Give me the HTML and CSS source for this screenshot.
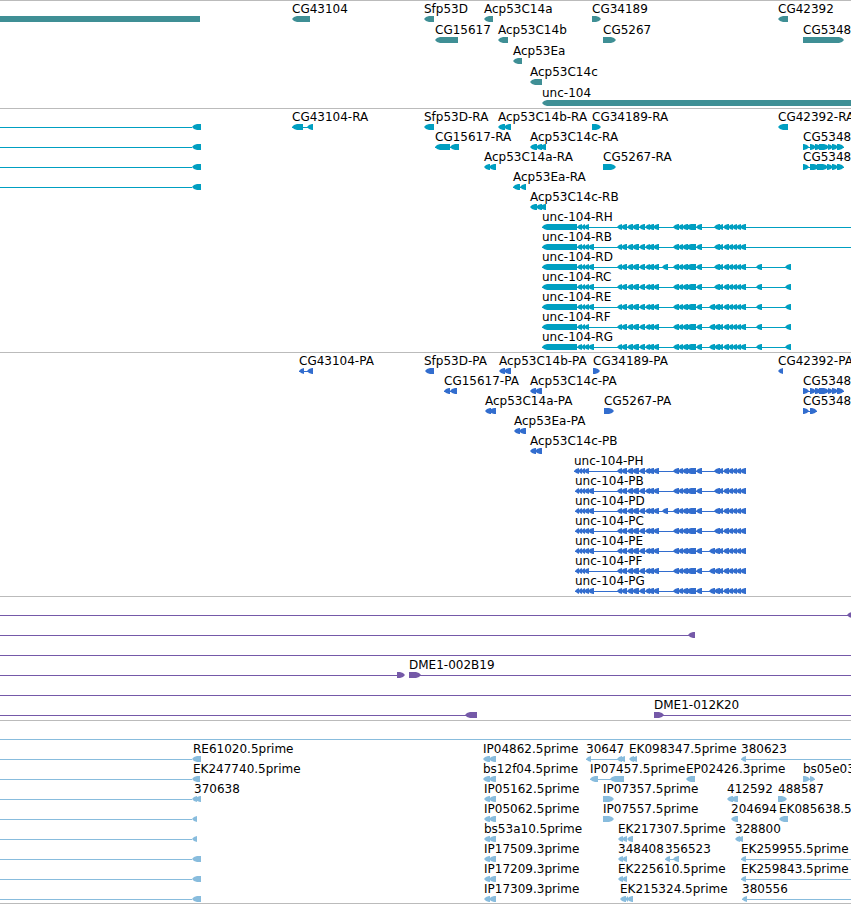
FILE: index.html
```html
<!DOCTYPE html>
<html lang="en">
<head>
    <meta charset="UTF-8">
    <meta name="viewport" content="width=device-width, initial-scale=1.0">
    <title>Genome Browser</title>
    <link rel="stylesheet" href="styles.css">
</head>
<body>
    <main class="browser">
        <section class="track genes" id="genes"></section>
        <section class="track transcripts" id="transcripts"></section>
        <section class="track proteins" id="proteins"></section>
        <section class="track clones" id="clones"></section>
        <section class="track ests" id="ests"></section>
    </main>
    <script src="tracks.js"></script>
</body>
</html>
```

FILE: styles.css
```css
body {
    margin: 0;
    background-color: #fff;
    color: #000;
    font-family: "DejaVu Sans", Verdana, sans-serif;
    font-size: 12px;
}
.browser {
    overflow: hidden;
    border-bottom: 1px solid #bbb;
}
.track {
    padding: 1px 0 2px;
    border-top: 1px solid #bbb;
}
.row {
    position: relative;
    height: 20px;
}
.label {
    position: absolute;
    top: 0;
    line-height: 14px;
    white-space: nowrap;
}
.glyphs {
    position: absolute;
    left: 0;
    top: 14px;
    width: 100%;
    height: 6px;
    fill: currentColor;
}
.genes {
    padding-bottom: 1px;
}
.genes .row {
    height: 21px;
}
.genes .glyphs {
    color: #3f8f95;
}
.transcripts .glyphs {
    color: #009fc1;
}
.proteins .glyphs {
    color: #326dce;
}
.clones .glyphs {
    color: #7559a8;
}
.ests {
    padding-bottom: 1px;
}
.ests .glyphs {
    color: #88bcdd;
}
```

FILE: tracks.js
```js
const END = 4000; // runs past the right edge of the view
const HEAD = 5;

// feature: name, label position, strand, exons, optional [from, to] of the line
function f(name, x, strand, exons, line) {
    return { name, x, strand, exons, line };
}

const left = (end) => f("", 0, "-", [[192, end]], [0, 192]);
const whole = f("", 0, "-", [], [0, END]);

// exons shared by all unc-104 isoforms
function unc(name, x, opts) {
    const exons = opts.protein
        ? [[x, 579], [578, 582], [581, 585], [584, 589]]
        : [[542, 577], [577, 582], [581, 585], [584, 589]];
    if (opts.a) exons.push([588, 594]);
    exons.push([617, 622], [621, 627], [627, 633], [632, 639], [639, 645], [645, 650], [648, 654], [653, 659]);
    if (opts.b) exons.push([662, 668]);
    exons.push([673, 679], [678, 683], [682, 688], [686, 696], [696, 702]);
    if (opts.c) exons.push([709, 715]);
    exons.push([714, 720], [718, 723], [723, 729], [728, 733], [732, 737], [736, 741], [740, 746]);
    if (opts.tail) exons.push([756, 762], [785, 791]);
    const to = opts.open ? END : exons[exons.length - 1][1];
    return f(name, x, "-", exons, [x, to]);
}

const c14c = [[530, 537], [536, 542], [540, 546]];
const cg5348a = [[803, 809], [810, 816], [815, 821], [819, 829], [828, 833], [832, 838], [837, 844]];
const cg5348b = [[803, 809], [810, 819], [817, 828], [827, 833], [832, 838], [837, 844]];
const est = [[484, 490], [489, 496]];

const tracks = {
    genes: [
        [f("", 0, "", [[0, 200]]),
            f("CG43104", 292, "-", [[292, 310]]),
            f("Sfp53D", 424, "-", [[424, 434]]),
            f("Acp53C14a", 484, "-", [[484, 493]]),
            f("CG34189", 592, "+", [[592, 601]]),
            f("CG42392", 778, "-", [[778, 788]])],
        [f("CG15617", 435, "-", [[435, 458]]),
            f("Acp53C14b", 498, "-", [[498, 508]]),
            f("CG5267", 603, "+", [[603, 616]]),
            f("CG5348", 803, "+", [[803, 844]])],
        [f("Acp53Ea", 513, "-", [[513, 522]])],
        [f("Acp53C14c", 530, "-", [[530, 542]])],
        [f("unc-104", 542, "-", [[542, END]])]
    ],
    transcripts: [
        [left(201),
            f("CG43104-RA", 292, "-", [[292, 303], [307, 313]], [292, 313]),
            f("Sfp53D-RA", 424, "-", [[424, 434]]),
            f("Acp53C14b-RA", 498, "-", [[498, 505], [504, 511]]),
            f("CG34189-RA", 592, "+", [[592, 601]]),
            f("CG42392-RA", 778, "-", [[778, 788]])],
        [left(201),
            f("CG15617-RA", 435, "-", [[435, 450], [450, 459]], [435, 459]),
            f("Acp53C14c-RA", 530, "-", c14c),
            f("CG5348", 803, "+", cg5348a, [803, 844])],
        [left(201),
            f("Acp53C14a-RA", 484, "-", [[484, 490], [489, 496]]),
            f("CG5267-RA", 603, "+", [[603, 616]]),
            f("CG5348", 803, "+", cg5348b, [803, 844])],
        [left(201),
            f("Acp53Ea-RA", 513, "-", [[513, 520], [520, 526]], [513, 526])],
        [f("Acp53C14c-RB", 530, "-", c14c)],
        [unc("unc-104-RH", 542, { open: true })],
        [unc("unc-104-RB", 542, { a: true, open: true })],
        [unc("unc-104-RD", 542, { a: true, b: true, tail: true })],
        [unc("unc-104-RC", 542, { a: true, tail: true })],
        [unc("unc-104-RE", 542, { a: true, c: true, tail: true })],
        [unc("unc-104-RF", 542, { c: true, tail: true })],
        [unc("unc-104-RG", 542, { a: true, c: true, tail: true })]
    ],
    proteins: [
        [f("CG43104-PA", 299, "-", [[299, 304], [307, 313]], [299, 313]),
            f("Sfp53D-PA", 424, "-", [[425, 434]]),
            f("Acp53C14b-PA", 499, "-", [[499, 505], [504, 511]]),
            f("CG34189-PA", 593, "+", [[593, 600]]),
            f("CG42392-PA", 778, "-", [[778, 783]])],
        [f("CG15617-PA", 444, "-", [[444, 450], [450, 457]], [444, 457]),
            f("Acp53C14c-PA", 530, "-", [[530, 536], [535, 542]]),
            f("CG5348", 803, "+", cg5348a, [803, 844])],
        [f("Acp53C14a-PA", 485, "-", [[485, 491], [489, 496]]),
            f("CG5267-PA", 604, "+", [[604, 614]]),
            f("CG5348", 803, "+", [[803, 809], [810, 817]], [803, 817])],
        [f("Acp53Ea-PA", 514, "-", [[514, 520], [519, 526]])],
        [f("Acp53C14c-PB", 530, "-", [[530, 536], [535, 542]])],
        [unc("unc-104-PH", 574, { protein: true })],
        [unc("unc-104-PB", 575, { protein: true, a: true })],
        [unc("unc-104-PD", 575, { protein: true, a: true, b: true })],
        [unc("unc-104-PC", 575, { protein: true, a: true })],
        [unc("unc-104-PE", 575, { protein: true, a: true, c: true })],
        [unc("unc-104-PF", 575, { protein: true, c: true })],
        [unc("unc-104-PG", 575, { protein: true, a: true, c: true })]
    ],
    clones: [
        [f("", 0, "-", [[847, 855]], [0, 855])],
        [f("", 0, "-", [[688, 695]], [0, 695])],
        [whole],
        [f("", 0, "+", [[397, 405]], [0, 404]),
            f("DME1-002B19", 409, "+", [[409, 421]], [409, END])],
        [whole],
        [f("", 0, "-", [[465, 477]], [0, 477]),
            f("DME1-012K20", 654, "+", [[654, 664]], [654, END])]
    ],
    ests: [
        [whole],
        [left(201),
            f("RE61020.5prime", 193, "", []),
            f("IP04862.5prime", 483, "-", [[483, 490], [489, 496]]),
            f("30647", 586, "-", [[586, 591], [617, 622], [620, 625]], [586, 625]),
            f("EK098347.5prime", 629, "-", [[629, 634], [632, 637]]),
            f("380623", 741, "-", [[741, 746]], [741, END])],
        [left(200),
            f("EK247740.5prime", 193, "", []),
            f("bs12f04.5prime", 483, "-", [[483, 490], [489, 496]]),
            f("IP07457.5prime", 590, "-", [[590, 598], [610, 624]], [590, 624]),
            f("EP02426.3prime", 686, "-", [[686, 695]]),
            f("bs05e03.5prime", 803, "+", [[803, 810], [810, 815]], [803, 815])],
        [left(197),
            f("370638", 194, "-", [[195, 201]]),
            f("IP05162.5prime", 484, "-", est),
            f("IP07357.5prime", 603, "+", [[603, 614]]),
            f("412592", 727, "-", [[727, 733], [731, 738]]),
            f("488587", 778, "+", [[778, 787]])],
        [left(197),
            f("IP05062.5prime", 484, "-", est),
            f("IP07557.5prime", 603, "+", [[603, 614]]),
            f("204694", 731, "-", [[731, 738]]),
            f("EK085638.5prime", 779, "-", [[779, 788]])],
        [left(197),
            f("bs53a10.5prime", 484, "-", est),
            f("EK217307.5prime", 618, "-", [[618, 623], [622, 627], [627, 633]]),
            f("328800", 735, "-", [[735, 740], [738, 743]])],
        [left(201),
            f("IP17509.3prime", 484, "-", est),
            f("348408", 618, "-", [[618, 623], [622, 627]]),
            f("356523", 665, "-", [[665, 670], [673, 679]], [665, 679]),
            f("EK259955.5prime", 741, "-", [[741, 746]], [741, END])],
        [left(201),
            f("IP17209.3prime", 484, "-", est),
            f("EK225610.5prime", 618, "-", [[618, 623], [622, 627]]),
            f("EK259843.5prime", 741, "-", [[741, 746]], [741, END])],
        [left(201),
            f("IP17309.3prime", 484, "-", est),
            f("EK215324.5prime", 620, "-", [[620, 626], [625, 628], [627, 633]]),
            f("380556", 742, "-", [[742, 747]], [742, END])]
    ]
};

function exonShape(strand, [from, to]) {
    const head = Math.min(HEAD, to - from);
    if (strand === "-") {
        const x = from + head;
        return `<polygon points="${from},3 ${from + 2},1 ${x},0 ${to},0 ${to},6 ${x},6 ${from + 2},5"/>`;
    }
    if (strand === "+") {
        const x = to - head;
        return `<polygon points="${from},0 ${x},0 ${to - 2},1 ${to},3 ${to - 2},5 ${x},6 ${from},6"/>`;
    }
    return `<rect x="${from}" y="0" width="${to - from}" height="6"/>`;
}

function renderRow(features) {
    let shapes = "";
    let labels = "";
    features.forEach(item => {
        if (item.line) {
            shapes += `<rect x="${item.line[0]}" y="3" width="${item.line[1] - item.line[0]}" height="1"/>`;
        }
        shapes += item.exons.map(exon => exonShape(item.strand, exon)).join("");
        if (item.name) {
            labels += `<span class="label" style="left: ${item.x}px">${item.name}</span>`;
        }
    });
    return `<div class="row"><svg class="glyphs" aria-hidden="true">${shapes}</svg>${labels}</div>`;
}

Object.keys(tracks).forEach(id => {
    document.getElementById(id).innerHTML = tracks[id].map(renderRow).join("");
});
```
